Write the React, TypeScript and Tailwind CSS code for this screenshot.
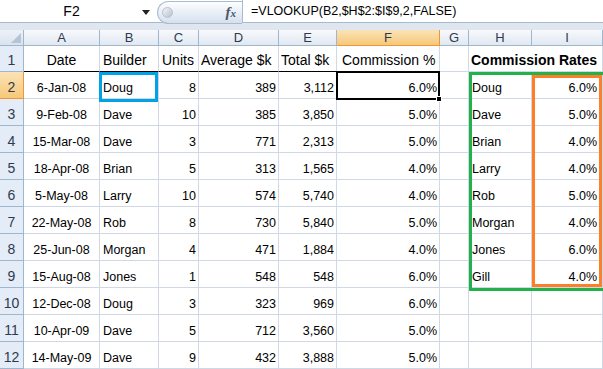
import React from "react";

const cols = ["A", "B", "C", "D", "E", "F", "G", "H", "I"];

// alignment per column: l = left, c = center, r = right
const align = ["c", "l", "r", "r", "r", "r", "l", "l", "r"];

const rows: string[][] = [
  ["6-Jan-08", "Doug", "8", "389", "3,112", "6.0%", "", "Doug", "6.0%"],
  ["9-Feb-08", "Dave", "10", "385", "3,850", "5.0%", "", "Dave", "5.0%"],
  ["15-Mar-08", "Dave", "3", "771", "2,313", "5.0%", "", "Brian", "4.0%"],
  ["18-Apr-08", "Brian", "5", "313", "1,565", "4.0%", "", "Larry", "4.0%"],
  ["5-May-08", "Larry", "10", "574", "5,740", "4.0%", "", "Rob", "5.0%"],
  ["22-May-08", "Rob", "8", "730", "5,840", "5.0%", "", "Morgan", "4.0%"],
  ["25-Jun-08", "Morgan", "4", "471", "1,884", "4.0%", "", "Jones", "6.0%"],
  ["15-Aug-08", "Jones", "1", "548", "548", "6.0%", "", "Gill", "4.0%"],
  ["12-Dec-08", "Doug", "3", "323", "969", "6.0%", "", "", ""],
  ["10-Apr-09", "Dave", "5", "712", "3,560", "5.0%", "", "", ""],
  ["14-May-09", "Dave", "9", "432", "3,888", "5.0%", "", "", ""],
];

const alignClass: Record<string, string> = {
  l: "justify-start pl-[3px]",
  c: "justify-center",
  r: "justify-end pr-[2px]",
};

function FormulaBar() {
  return (
    <div className="relative h-[30px] bg-[#dfe6ef]">
      <div className="flex h-[23px] border-b border-[#a7b9cf] bg-white">
        {/* name box */}
        <div className="relative flex w-[157px] items-center justify-center text-[14px]">
          <span className="-ml-[14px]">F2</span>
          <svg
            className="absolute right-[7px] top-[10px]"
            width="8"
            height="5"
            viewBox="0 0 8 5"
          >
            <path d="M0 0h8L4 5z" fill="#222" />
          </svg>
        </div>
        {/* fx pill */}
        <div className="relative z-10 -mb-[2px] mt-[1px] flex w-[85px] items-center justify-between rounded-l-full border border-r-0 border-[#a9bbd1] bg-gradient-to-b from-[#fdfeff] via-[#e9eff7] to-[#d5e0ee] pl-[4px] pr-[6px]">
          <span className="h-[11px] w-[11px] rounded-full border border-[#b7c0cc] bg-gradient-to-br from-[#f3f5f8] to-[#b9c2cd]" />
          <span className="font-['Liberation_Serif',serif] text-[15px] font-bold italic text-[#4a5566]">
            f<span className="text-[11px]">x</span>
          </span>
        </div>
        {/* formula */}
        <div className="flex flex-1 items-center border-l border-[#a9bbd1] pl-[8px] text-[12.5px]">
          =VLOOKUP(B2,$H$2:$I$9,2,FALSE)
        </div>
      </div>
    </div>
  );
}

export default function App() {
  return (
    <div className="h-[369px] w-[603px] overflow-hidden bg-white font-['Liberation_Sans',Arial,sans-serif] text-black">
      <FormulaBar />
      <div className="relative grid grid-cols-[24px_76px_59px_40px_80px_58px_103px_29px_63px_71px] grid-rows-[16px_26px_repeat(11,27px)]">
        {/* corner */}
        <div className="relative border-r border-b border-[#9eb6ce] bg-gradient-to-b from-[#eef2f8] to-[#d9e2ee]">
          <svg
            className="absolute bottom-[2px] right-[2px]"
            width="10"
            height="10"
            viewBox="0 0 10 10"
          >
            <path d="M10 0V10H0z" fill="#b4c3d6" />
          </svg>
        </div>
        {/* column headers */}
        {cols.map((c) => (
          <div
            key={c}
            className={
              c === "F"
                ? "flex items-center justify-center border-r border-b border-[#f29536] bg-gradient-to-b from-[#fbe3b6] to-[#f6c878] text-[13px] text-[#2e3b4e]"
                : "flex items-center justify-center border-r border-b border-[#9eb6ce] bg-gradient-to-b from-[#f7f9fc] to-[#e1e8f1] text-[13px] text-[#2e3b4e]"
            }
          >
            {c}
          </div>
        ))}

        {/* row 1 */}
        <div className="flex items-end justify-center border-r border-b border-[#9eb6ce] bg-[#e4ecf7] pb-[4px] text-[14px] leading-none text-[#2e3b4e]">
          1
        </div>
        <div className="flex items-end justify-center border-r border-b border-r-[#d0d7e5] border-b-black pb-[4px] text-[14px] leading-none">
          Date
        </div>
        <div className="flex items-end border-r border-b border-r-[#d0d7e5] border-b-black pb-[4px] pl-[3px] text-[14px] leading-none">
          Builder
        </div>
        <div className="flex items-end border-r border-b border-r-[#d0d7e5] border-b-black pb-[4px] pl-[3px] text-[14px] leading-none">
          Units
        </div>
        <div className="flex items-end border-r border-b border-r-[#d0d7e5] border-b-black pb-[4px] pl-[2px] text-[14px] leading-none whitespace-nowrap">
          Average $k
        </div>
        <div className="flex items-end border-r border-b border-r-[#d0d7e5] border-b-black pb-[4px] pl-[2px] text-[14px] leading-none whitespace-nowrap">
          Total $k
        </div>
        <div className="flex items-end border-r border-b border-r-[#d0d7e5] border-b-black pb-[4px] pl-[5px] text-[14px] leading-none whitespace-nowrap">
          Commission %
        </div>
        <div className="border-r border-b border-[#d0d7e5]" />
        <div className="flex items-end overflow-visible border-b border-[#d0d7e5] pb-[4px] pl-[2px] text-[14px] leading-none font-bold whitespace-nowrap">
          Commission Rates
        </div>
        <div className="border-r border-b border-[#d0d7e5]" />

        {/* data rows */}
        {rows.map((r, i) => (
          <React.Fragment key={i}>
            <div
              className={
                i === 0
                  ? "flex items-end justify-center border-r border-b border-[#f29536] bg-gradient-to-b from-[#fbe3b6] to-[#f6c878] pb-[4px] text-[14px] leading-none text-[#2e3b4e]"
                  : "flex items-end justify-center border-r border-b border-[#9eb6ce] bg-[#e4ecf7] pb-[4px] text-[14px] leading-none text-[#2e3b4e]"
              }
            >
              {i + 2}
            </div>
            {r.map((v, j) => (
              <div
                key={j}
                className={`flex items-end whitespace-nowrap border-r border-b border-[#d0d7e5] pb-[4px] text-[12.5px] leading-none ${alignClass[align[j]]} ${j === 8 ? "pr-[5px]" : ""}`}
              >
                {v}
              </div>
            ))}
          </React.Fragment>
        ))}

        {/* highlight boxes drawn over the sheet */}
        <div className="pointer-events-none absolute left-[99px] top-[42px] h-[30px] w-[59px] border-[3px] border-[#00a2e8]" />
        <div className="pointer-events-none absolute left-[336px] top-[41px] h-[29px] w-[104px] border-2 border-black" />
        <div className="pointer-events-none absolute left-[436px] top-[66px] h-[6px] w-[6px] border border-white bg-black" />
        <div className="pointer-events-none absolute left-[469px] top-[42px] h-[219px] w-[140px] border-[3px] border-[#22b14c]" />
        <div className="pointer-events-none absolute left-[532px] top-[45px] h-[212px] w-[70px] border-[3px] border-[#ff7f27]" />
      </div>
    </div>
  );
}
